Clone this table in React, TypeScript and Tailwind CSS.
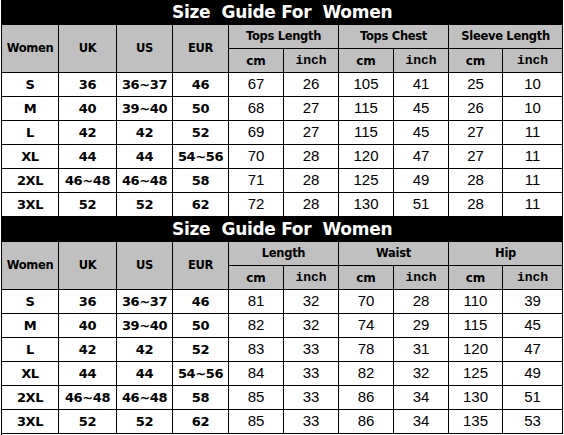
import React from "react";

type Row = { size: string; uk: string; us: string; eur: string; vals: number[] };

const TOPS: Row[] = [
  { size: "S", uk: "36", us: "36~37", eur: "46", vals: [67, 26, 105, 41, 25, 10] },
  { size: "M", uk: "40", us: "39~40", eur: "50", vals: [68, 27, 115, 45, 26, 10] },
  { size: "L", uk: "42", us: "42", eur: "52", vals: [69, 27, 115, 45, 27, 11] },
  { size: "XL", uk: "44", us: "44", eur: "54~56", vals: [70, 28, 120, 47, 27, 11] },
  { size: "2XL", uk: "46~48", us: "46~48", eur: "58", vals: [71, 28, 125, 49, 28, 11] },
  { size: "3XL", uk: "52", us: "52", eur: "62", vals: [72, 28, 130, 51, 28, 11] },
];

const BOTTOMS: Row[] = [
  { size: "S", uk: "36", us: "36~37", eur: "46", vals: [81, 32, 70, 28, 110, 39] },
  { size: "M", uk: "40", us: "39~40", eur: "50", vals: [82, 32, 74, 29, 115, 45] },
  { size: "L", uk: "42", us: "42", eur: "52", vals: [83, 33, 78, 31, 120, 47] },
  { size: "XL", uk: "44", us: "44", eur: "54~56", vals: [84, 33, 82, 32, 125, 49] },
  { size: "2XL", uk: "46~48", us: "46~48", eur: "58", vals: [85, 33, 86, 34, 130, 51] },
  { size: "3XL", uk: "52", us: "52", eur: "62", vals: [85, 33, 86, 34, 135, 53] },
];

const head = "border border-black bg-[#c0c0c0] p-0 text-[11.5px] font-bold text-black [font-family:'DejaVu_Sans',sans-serif] tracking-[-0.3px]";
const unitCm = "border border-black bg-[#c0c0c0] p-0 text-[12px] font-bold [font-family:'DejaVu_Sans',sans-serif]";
const unitInch = "border border-black bg-[#c0c0c0] p-0 text-[13px] font-bold [font-family:'Liberation_Mono',monospace]";

function SizeTable({ groups, rows, titleH }: { groups: string[]; rows: Row[]; titleH: string }) {
  return (
    <table className="w-[561px] table-fixed border-collapse text-center">
      <colgroup>
        <col className="w-[57px]" />
        <col className="w-[58px]" />
        <col className="w-[56px]" />
        <col className="w-[56px]" />
        <col className="w-[55px]" />
        <col className="w-[55px]" />
        <col className="w-[55px]" />
        <col className="w-[55px]" />
        <col className="w-[54px]" />
        <col className="w-[60px]" />
      </colgroup>
      <thead>
        <tr className={titleH}>
          <th
            colSpan={10}
            className="border border-black bg-black p-0 text-[17px] font-bold leading-none text-white whitespace-pre [font-family:'DejaVu_Sans',sans-serif] tracking-[-0.3px]"
          >
            {"Size  Guide For  Women"}
          </th>
        </tr>
        <tr className="h-[24px]">
          <th rowSpan={2} className={head}>Women</th>
          <th rowSpan={2} className={head}>UK</th>
          <th rowSpan={2} className={head}>US</th>
          <th rowSpan={2} className={head}>EUR</th>
          {groups.map((g) => (
            <th key={g} colSpan={2} className={head}>
              {g}
            </th>
          ))}
        </tr>
        <tr className="h-[24px]">
          {groups.map((g) => (
            <React.Fragment key={g}>
              <th className={unitCm}>cm</th>
              <th className={unitInch}>inch</th>
            </React.Fragment>
          ))}
        </tr>
      </thead>
      <tbody>
        {rows.map((r) => (
          <tr key={r.size} className="h-[24px]">
            {[r.size, r.uk, r.us, r.eur].map((v, i) => (
              <td
                key={i}
                className="border border-black p-0 text-[13px] font-bold text-black [font-family:'DejaVu_Sans',sans-serif] tracking-[-0.4px]"
              >
                {v}
              </td>
            ))}
            {r.vals.map((v, i) => (
              <td
                key={i}
                className="border border-black p-0 text-[15px] text-black [font-family:'Liberation_Sans',sans-serif]"
              >
                {v}
              </td>
            ))}
          </tr>
        ))}
      </tbody>
    </table>
  );
}

export default function App() {
  return (
    <div className="h-[435px] w-[564px] overflow-hidden bg-white pl-[1px]">
      <SizeTable groups={["Tops Length", "Tops Chest", "Sleeve Length"]} rows={TOPS} titleH="h-[24px]" />
      <SizeTable groups={["Length", "Waist", "Hip"]} rows={BOTTOMS} titleH="h-[24px]" />
      <div className="h-[6px] border-l border-black" />
    </div>
  );
}
